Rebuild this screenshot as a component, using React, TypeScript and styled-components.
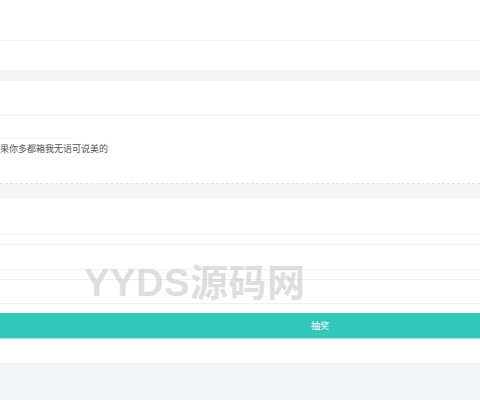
import React from "react";
import styled, { createGlobalStyle } from "styled-components";

const GlobalStyle = createGlobalStyle`
  html, body {
    margin: 0;
    padding: 0;
    background: #ffffff;
    font-family: "Noto Sans CJK SC", "Noto Sans", sans-serif;
  }
`;

const StyledPage = styled("div")`
  position: relative;
  width: 480px;
  height: 400px;
  overflow: hidden;
  display: flex;
  flex-direction: column;
`;

const StyledRow = styled("div")<{ $h: number; $line?: string; $dotted?: boolean }>`
  height: ${(p) => p.$h}px;
  flex-shrink: 0;
  box-sizing: border-box;
  border-bottom: 1px ${(p) => (p.$dotted ? "dashed" : "solid")}
    ${(p) => p.$line || "transparent"};
  background: #ffffff;
`;

const StyledGap = styled("div")<{ $h: number }>`
  height: ${(p) => p.$h}px;
  flex-shrink: 0;
  background: #f4f5f9;
`;

const StyledMessage = styled("div")`
  height: 68px;
  flex-shrink: 0;
  box-sizing: border-box;
  border-bottom: 1px dashed #e2e4ea;
  display: flex;
  flex-direction: column;
  padding-top: 17px;
  gap: 1px;
`;

const StyledHint = styled("span")`
  font-size: 7px;
  line-height: 9px;
  color: #eef0f4;
  white-space: nowrap;
`;

const StyledText = styled("span")`
  font-size: 9px;
  line-height: 12px;
  color: #555555;
  white-space: nowrap;
`;

const StyledButton = styled("button")`
  height: 26px;
  flex-shrink: 0;
  border: none;
  border-bottom: 1px solid #a6e6df;
  background: #33c7b9;
  color: #ffffff;
  font-family: "Noto Sans CJK SC", sans-serif;
  font-size: 9px;
  padding: 0 0 0 160px;
  display: flex;
  align-items: center;
  justify-content: center;
`;

const StyledMark = styled("div")`
  position: absolute;
  left: 84px;
  top: 252px;
  font-family: "Liberation Sans", "Noto Sans CJK SC", sans-serif;
  font-weight: 700;
  font-size: 38px;
  letter-spacing: 0.6px;
  color: rgba(200, 200, 200, 0.6);
  pointer-events: none;
  white-space: nowrap;
`;

const App: React.FC = () => {
  return (
    <StyledPage>
      <GlobalStyle />
      <StyledRow $h={41} $line="#f4f4f6" />
      <StyledRow $h={29} />
      <StyledGap $h={11} />
      <StyledRow $h={35} $line="#f2f3f5" />
      <StyledMessage>
        <StyledHint>—————————————</StyledHint>
        <StyledText>果你多都箱我无语可说美的</StyledText>
      </StyledMessage>
      <StyledGap $h={15} />
      <StyledRow $h={36} $line="#f3f3f5" />
      <StyledRow $h={10} $line="#eeeeef" />
      <StyledRow $h={25} $line="#f3f3f5" />
      <StyledRow $h={10} $line="#eeeeef" />
      <StyledRow $h={24} $line="#eeeeef" />
      <StyledRow $h={9} />
      <StyledButton>抽奖</StyledButton>
      <StyledRow $h={24} />
      <StyledGap $h={38} />
      <StyledMark>YYDS源码网</StyledMark>
    </StyledPage>
  );
};

export default App;
